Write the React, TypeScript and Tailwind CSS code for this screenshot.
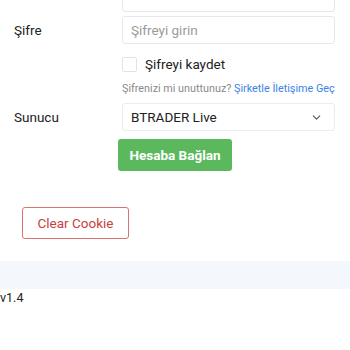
import { ChevronDown } from "lucide-react";

export default function App() {
  return (
    <div className="w-[350px] h-[350px] overflow-hidden bg-white font-['Roboto',sans-serif] text-[#222]">
      <div className="-mt-[16px] pl-[14px] pr-[15px]">
        {/* field cut off at the top */}
        <div className="flex items-start h-[28px]">
          <div className="w-[108px] text-[13.5px] leading-[16px] -mt-[2px] pl-[6px]">Hesap</div>
          <div className="flex-1 h-[28px] border border-[#e5e7eb] rounded-[3px] pl-[8px] text-[13.5px] leading-[16px] text-[#9a9a9a]">
            <span className="-mt-[2px] block">Hesap numaranızı girin</span>
          </div>
        </div>
        <div className="flex items-center h-[28px] mt-[4px]">
          <div className="w-[108px] text-[13.5px]">Şifre</div>
          <div className="flex-1 h-[28px] border border-[#e8e8e8] rounded-[3px] flex items-center pl-[8px] text-[13.5px] text-[#9a9a9a]">
            Şifreyi girin
          </div>
        </div>
        <div className="pl-[108px] flex items-center mt-[13px] h-[15px]">
          <div className="w-[15px] h-[15px] border border-[#e3e3e3] rounded-[2px]" />
          <span className="ml-[8px] text-[13.5px] text-[#222]">Şifreyi kaydet</span>
        </div>
        <div className="pl-[108px] mt-[9px] text-[10.8px] text-[#8a8a8a] whitespace-nowrap">
          Şifrenizi mi unuttunuz? <span className="text-[#3b82e6]">Şirketle İletişime Geç</span>
        </div>
        <div className="flex items-center h-[28px] mt-[6px]">
          <div className="w-[108px] text-[13.5px]">Sunucu</div>
          <div className="flex-1 h-[28px] border border-[#ececec] rounded-[3px] flex items-center justify-between pl-[8px] pr-[11px] text-[13.5px] text-[#222]">
            <span>BTRADER Live</span>
            <ChevronDown className="w-[13px] h-[13px] text-[#555]" strokeWidth={2} />
          </div>
        </div>
        <div className="pl-[104px] mt-[8px]">
          <button className="w-[114px] h-[32px] rounded-[3px] bg-[#5cb85c] text-white text-[13.5px] font-bold">
            Hesaba Bağlan
          </button>
        </div>
      </div>
      <div className="pl-[22px] mt-[36px]">
        <button className="w-[107px] h-[32px] rounded-[3px] border border-[#d9736e] text-[#c9413b] text-[13.5px]">
          Clear Cookie
        </button>
      </div>
      <div className="mt-[22px] h-[28px] bg-[#f4f7fc]" />
      <div className="text-[12.5px] text-[#222] leading-[18px]">v1.4</div>
    </div>
  );
}
